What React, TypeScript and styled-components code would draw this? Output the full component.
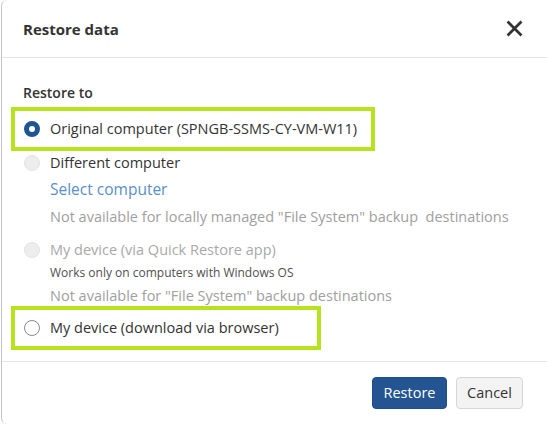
import React, { useState } from "react";
import styled, { createGlobalStyle, css } from "styled-components";

const GlobalStyle = createGlobalStyle`
  html, body {
    margin: 0;
    padding: 0;
    background: #ffffff;
  }
  body {
    font-family: "Open Sans", "Noto Sans", Arial, sans-serif;
    color: #333333;
    -webkit-font-smoothing: antialiased;
  }
  * { box-sizing: border-box; }
`;

const Dialog = styled.div`
  width: 546px;
  height: 424px;
  margin-left: 1px;
  display: flex;
  flex-direction: column;
  background: #ffffff;
  border-left: 1px solid #c6c6c6;
  border-top-left-radius: 6px;
  border-bottom-left-radius: 6px;
  overflow: hidden;
`;

const Header = styled.div`
  height: 58px;
  flex: none;
  display: flex;
  align-items: center;
  justify-content: space-between;
  padding: 0 24px 0 21px;
  border-bottom: 1px solid #e4e4e4;
`;

const Title = styled.h2`
  margin: 0;
  font-size: 15px;
  font-weight: 700;
  line-height: 20px;
  color: #333333;
`;

const CloseButton = styled.button`
  width: 18px;
  height: 18px;
  padding: 0;
  border: 0;
  background: none;
  display: flex;
  align-items: center;
  justify-content: center;
  cursor: pointer;
`;

const Body = styled.div`
  flex: 1;
  display: flex;
  flex-direction: column;
  align-items: flex-start;
  padding-top: 25px;
`;

const SectionTitle = styled.div`
  margin: 0 0 4px 21px;
  font-size: 14px;
  font-weight: 600;
  line-height: 20px;
  color: #333333;
`;

const OptionRow = styled.label<{ $boxWidth?: number; $muted?: boolean }>`
  display: flex;
  align-items: center;
  gap: 10px;
  height: 24px;
  padding-left: 22px;
  font-size: 14.5px;
  line-height: 20px;
  color: ${(p) => (p.$muted ? "#a9a9a9" : "#333333")};
  cursor: ${(p) => (p.$muted ? "default" : "pointer")};
  ${(p) =>
    p.$boxWidth &&
    css`
      width: ${p.$boxWidth}px;
      height: 44px;
      margin-left: 9px;
      padding: 0 0 0 9px;
      border: 4px solid #b6e31e;
    `}
`;

const Radio = styled.span<{ $state: "checked" | "empty" | "disabled" }>`
  flex: none;
  width: 16px;
  height: 16px;
  border-radius: 50%;
  ${(p) =>
    p.$state === "checked"
      ? css`
          background: #ffffff;
          border: 5px solid #1f5592;
        `
      : p.$state === "disabled"
      ? css`
          background: #ededed;
          border: 1px solid #e2e2e2;
        `
      : css`
          background: #ffffff;
          border: 1.5px solid #8c8c8c;
        `}
`;

const HiddenInput = styled.input`
  display: none;
`;

const SubLine = styled.div<{ $tone: "link" | "muted" | "note"; $top: number }>`
  margin: ${(p) => p.$top}px 0 0 48px;
  font-size: ${(p) => (p.$tone === "link" ? 15.5 : p.$tone === "note" ? 12 : 14.5)}px;
  line-height: ${(p) => (p.$tone === "note" ? 16 : 20)}px;
  color: ${(p) =>
    p.$tone === "link" ? "#5a8fc8" : p.$tone === "note" ? "#4f4f4f" : "#a0a0a0"};
  white-space: pre;
  ${(p) =>
    p.$tone === "link" &&
    css`
      cursor: pointer;
    `}
`;

const Spacer = styled.div<{ $h: number }>`
  height: ${(p) => p.$h}px;
`;

const Footer = styled.div`
  height: 63px;
  flex: none;
  display: flex;
  align-items: center;
  justify-content: flex-end;
  gap: 9px;
  padding: 0 24px 0 0;
  border-top: 1px solid #e6e6e6;
`;

const Button = styled.button<{ $primary?: boolean }>`
  height: 32px;
  padding: 0;
  border-radius: 4px;
  font-family: inherit;
  font-size: 14.5px;
  line-height: 20px;
  cursor: pointer;
  ${(p) =>
    p.$primary
      ? css`
          width: 75px;
          background: #245592;
          border: 1px solid #1f4d86;
          color: #ffffff;
        `
      : css`
          width: 67px;
          background: #f3f3f3;
          border: 1px solid #d6d6d6;
          color: #333333;
        `}
`;

type Target = "original" | "different" | "quick" | "browser";

export default function App() {
  const [target, setTarget] = useState<Target>("original");

  const state = (t: Target, disabled?: boolean) =>
    disabled ? "disabled" : target === t ? "checked" : "empty";

  return (
    <>
      <GlobalStyle />
      <Dialog role="dialog" aria-label="Restore data">
        <Header>
          <Title>Restore data</Title>
          <CloseButton aria-label="Close">
            <svg width="17" height="17" viewBox="0 0 17 17">
              <path
                d="M2.5 2.5 L14.5 14.5 M14.5 2.5 L2.5 14.5"
                stroke="#333333"
                strokeWidth="2.7"
                strokeLinecap="square"
                fill="none"
              />
            </svg>
          </CloseButton>
        </Header>

        <Body>
          <SectionTitle>Restore to</SectionTitle>

          <OptionRow $boxWidth={364} onClick={() => setTarget("original")}>
            <HiddenInput type="radio" name="target" readOnly checked={target === "original"} />
            <Radio $state={state("original")} />
            Original computer (SPNGB-SSMS-CY-VM-W11)
          </OptionRow>

          <OptionRow>
            <Radio $state={state("different", true)} />
            Different computer
          </OptionRow>
          <SubLine $tone="link" $top={4}>Select computer</SubLine>
          <SubLine $tone="muted" $top={8}>
            {'Not available for locally managed "File System" backup  destinations'}
          </SubLine>

          <Spacer $h={11} />
          <OptionRow $muted>
            <Radio $state={state("quick", true)} />
            My device (via Quick Restore app)
          </OptionRow>
          <SubLine $tone="note" $top={3}>Works only on computers with Windows OS</SubLine>
          <SubLine $tone="muted" $top={5}>
            {'Not available for "File System" backup destinations'}
          </SubLine>

          <OptionRow $boxWidth={310} onClick={() => setTarget("browser")}>
            <HiddenInput type="radio" name="target" readOnly checked={target === "browser"} />
            <Radio $state={state("browser")} />
            My device (download via browser)
          </OptionRow>
        </Body>

        <Footer>
          <Button $primary>Restore</Button>
          <Button>Cancel</Button>
        </Footer>
      </Dialog>
    </>
  );
}
